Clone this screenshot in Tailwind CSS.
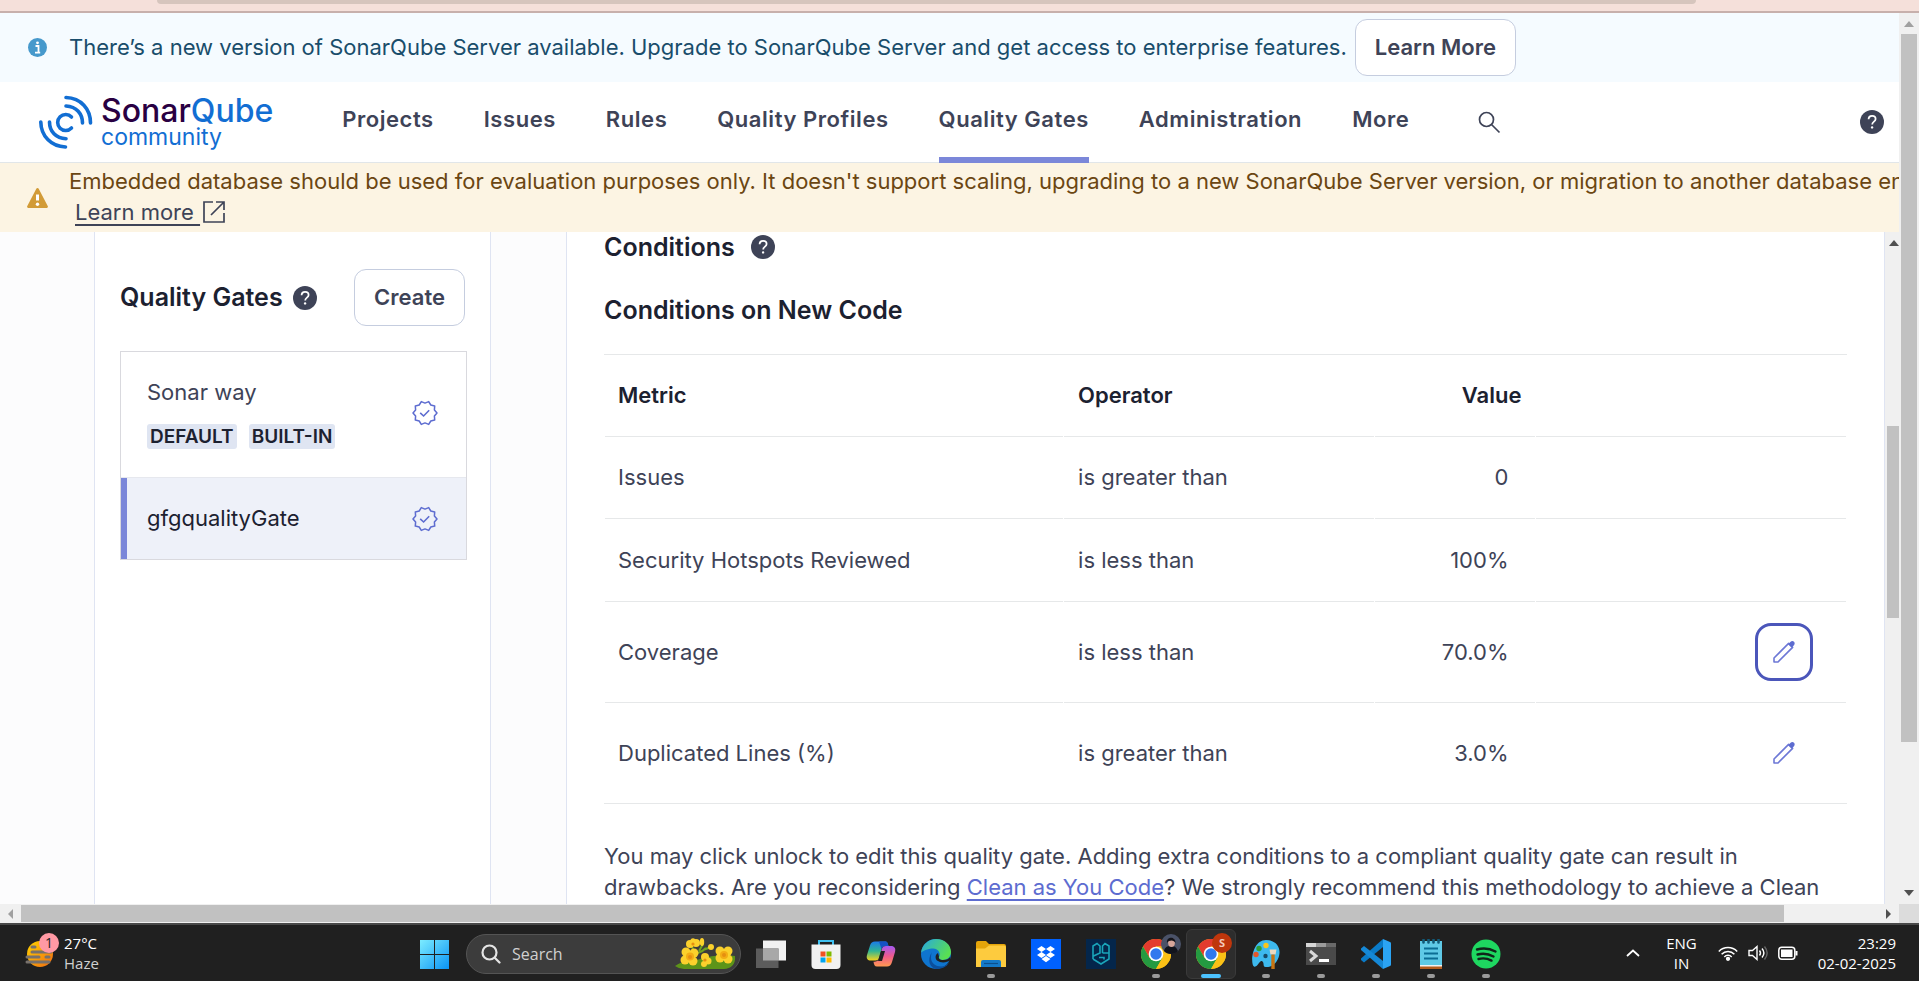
<!DOCTYPE html>
<html lang="en">
<head>
<meta charset="utf-8">
<title>Quality Gates - SonarQube</title>
<script src="https://cdn.jsdelivr.net/npm/@tailwindcss/browser@4"></script>
</head>
<body class="h-screen overflow-hidden flex flex-col bg-white font-['Inter',sans-serif] text-[22px] leading-[31px] text-[#3e4357]">

<!-- shared icon symbols -->
<svg class="hidden">
  <symbol id="help" viewBox="0 0 24 24">
    <circle cx="12" cy="12" r="12" fill="#3e4357"/>
    <path d="M8.6 9.3C8.6 7.2 10 5.8 12.1 5.8s3.5 1.3 3.5 3.2c0 2.6-3.4 2.7-3.4 5.4" fill="none" stroke="#fff" stroke-width="1.8"/>
    <circle cx="12.1" cy="17.4" r="1.2" fill="#fff"/>
  </symbol>
  <symbol id="seal" viewBox="0 0 26 26">
    <path d="M25 13 22.4 16.1 22.7 20.1 18.8 21 16.7 24.4 13 22.9 9.3 24.4 7.200 21 3.300 20.100 3.600 16.100 1 13 3.600 9.900 3.300 5.900 7.200 5 9.300 1.600 13 3.100 16.700 1.600 18.800 5 22.700 5.900 22.400 9.900Z" fill="none" stroke="#5d6cd0" stroke-width="1.5" stroke-linejoin="round"/>
    <path d="m8.2 12.8 3.4 3.2 5.6-5.8" fill="none" stroke="#5d6cd0" stroke-width="1.6"/>
  </symbol>
  <symbol id="pencil" viewBox="0 0 24 24">
    <path d="M2 22v-4L16.600 3.400l4 4L6 22Z" fill="none" stroke="#6d78d6" stroke-width="1.600" stroke-linejoin="round"/>
    <path d="m16.200 4.200 2.400-2.400c1-1 2.600-.8 3.400 0 .9.9.9 2.400 0 3.400l-2.400 2.400Z" fill="#5d6cd0"/>
  </symbol>
  <symbol id="chrome" viewBox="0 0 30 30">
    <circle cx="15" cy="15" r="15" fill="#fbc116"/>
    <path d="M2 7.500A15 15 0 0 1 28 7.500H15L8.500 18.750Z" fill="#e33b2e"/>
    <path d="M2 7.500A15 15 0 0 0 15 30L21.500 18.750 8.500 18.750Z" fill="#249a41"/>
    <path d="M28 7.500H15l6.500 11.250L15 30A15 15 0 0 0 28 7.500Z" fill="#fbc116"/>
    <circle cx="15" cy="15" r="7.300" fill="#fff"/>
    <circle cx="15" cy="15" r="5.700" fill="#3079ee"/>
  </symbol>
</svg>

<!-- browser toolbar edge -->
<div class="h-[13px] shrink-0 bg-[#f5e0da] border-b-2 border-[#c7b0ac] pl-[157px] pr-[223px]">
  <div class="h-1 rounded-b-xl bg-[#d6c5bd]"></div>
</div>

<div class="flex-1 min-h-0 flex">
  <div class="flex-1 min-w-0 flex flex-col">

    <!-- update banner -->
    <div class="h-[69px] shrink-0 flex items-center bg-[#f5fbff] pl-7">
      <svg class="size-[19px] shrink-0" viewBox="0 0 19 19"><circle cx="9.500" cy="9.500" r="9.500" fill="#4699cc"/><circle cx="9.500" cy="4.800" r="1.400" fill="#fff"/><path d="M7.500 8h3v6.500M7 14.600h5.200" fill="none" stroke="#fff" stroke-width="1.800"/></svg>
      <p class="ml-[22px] whitespace-nowrap text-[#194d6b]">There’s a new version of SonarQube Server available. Upgrade to SonarQube Server and get access to enterprise features.</p>
      <button class="ml-2 h-[57px] px-[19px] rounded-xl border border-[#c5cddf] bg-white font-semibold whitespace-nowrap">Learn More</button>
    </div>

    <!-- global navigation -->
    <header class="h-[81px] shrink-0 flex items-center border-b border-[#e1e6e9] bg-white pl-[38px] pr-[15px]">
      <a href="#" class="flex items-center" aria-label="SonarQube community">
        <svg class="size-14" viewBox="0 0 56 56" fill="none" stroke="#126ed3" stroke-width="3.600" stroke-linecap="round"><path d="M28 3.500C43 4 52.500 15 52.500 29M28 12c10.500.5 16.500 8 16.500 17M33.500 23a8 8 0 1 0 0 11M2.800 28C3 42 13 52.500 27.500 53M11.500 28c0 9.500 6.500 16.500 16.500 16.800"/></svg>
        <span class="ml-[7px] flex flex-col">
          <span class="text-[32px] leading-[30px] font-medium text-[#290042]">Sonar<span class="text-[#126ed3]">Qube</span></span>
          <span class="text-[23px] leading-[22px] text-[#126ed3]">community</span>
        </span>
      </a>
      <nav class="ml-[69px] flex self-stretch gap-[50px] font-semibold tracking-wide whitespace-nowrap">
        <a href="#" class="flex items-center pb-1.5">Projects</a>
        <a href="#" class="flex items-center pb-1.5">Issues</a>
        <a href="#" class="flex items-center pb-1.5">Rules</a>
        <a href="#" class="flex items-center pb-1.5">Quality Profiles</a>
        <a href="#" class="-mb-px flex items-center border-b-6 border-[#7b87d9]">Quality Gates</a>
        <a href="#" class="flex items-center pb-1.5">Administration</a>
        <a href="#" class="flex items-center pb-1.5">More</a>
      </nav>
      <button class="ml-[68px]" aria-label="Search"><svg class="size-6" viewBox="0 0 24 24" fill="none" stroke="#3e4357" stroke-width="1.700"><circle cx="9.500" cy="9.500" r="7"/><path d="m14.500 14.500 8 8"/></svg></button>
      <button class="ml-auto" aria-label="Help"><svg class="size-6"><use href="#help"/></svg></button>
    </header>

    <!-- database warning -->
    <div class="h-[69px] shrink-0 flex items-center bg-[#fcf4e3] pl-[27px] overflow-hidden">
      <svg class="w-[21px] h-5 shrink-0" viewBox="0 0 21 20"><path d="M9.300.8a1.400 1.400 0 0 1 2.400 0l9 17.200a1.300 1.300 0 0 1-1.200 2h-18a1.300 1.300 0 0 1-1.200-2Z" fill="#d29b37"/><path d="M10.500 6.500v6" stroke="#fff" stroke-width="3"/><circle cx="10.500" cy="16.300" r="1.700" fill="#fff"/></svg>
      <div class="ml-[21px] pb-0.5 whitespace-nowrap text-[#6b4612]">
        <p>Embedded database should be used for evaluation purposes only. It doesn't support scaling, upgrading to a new SonarQube Server version, or migration to another database engine.</p>
        <a href="#" class="ml-1.5 flex items-center text-[#3e4357]"><span class="whitespace-pre underline underline-offset-4">Learn more </span><svg class="ml-[3px] size-[22px]" viewBox="0 0 22 22" fill="none" stroke="#3e4357" stroke-width="1.700"><path d="M10 1H1v20h20v-9M13 1h8v8M21 1 8 14"/></svg></a>
      </div>
    </div>

    <!-- page body -->
    <div class="flex-1 min-h-0 flex bg-[#fcfcfd] pl-[94px]">
      <aside class="w-[397px] shrink-0 border-x border-[#dfe4f2] bg-white px-[25px] pt-[37px]">
        <div class="flex items-center">
          <h2 class="text-[25px] font-semibold text-[#1c2130] whitespace-nowrap">Quality Gates</h2>
          <svg class="ml-2.5 size-6 shrink-0"><use href="#help"/></svg>
          <button class="ml-auto h-[57px] px-[19px] rounded-xl border border-[#c5cddf] bg-white font-semibold">Create</button>
        </div>
        <ul class="mt-[25px] -mr-0.5 border border-[#d9d9de]">
          <li class="flex items-center justify-between h-[126px] border-b border-[#e6e8ee] pb-1 pl-[26px] pr-7">
            <div>
              <a href="#">Sonar way</a>
              <div class="mt-4 flex gap-3 text-[19px] leading-[25px] font-semibold text-[#1c2130]">
                <span class="rounded-[3px] bg-[#dfe5f2] px-[3px]">DEFAULT</span>
                <span class="rounded-[3px] bg-[#dfe5f2] px-[3px]">BUILT-IN</span>
              </div>
            </div>
            <svg class="size-[26px]"><use href="#seal"/></svg>
          </li>
          <li class="flex items-center justify-between h-[81px] border-l-6 border-[#7b87d9] bg-[#eef1f9] pl-5 pr-7 text-[#1c2130]">
            <a href="#">gfgqualityGate</a>
            <svg class="size-[26px]"><use href="#seal"/></svg>
          </li>
        </ul>
      </aside>

      <main class="ml-[75px] flex-1 min-w-0 border-x border-[#dfe4f2] bg-white px-[37px] overflow-hidden">
        <div class="flex items-center h-[30px]">
          <h3 class="text-[25px] font-semibold text-[#1c2130]">Conditions</h3>
          <svg class="ml-4 size-6"><use href="#help"/></svg>
        </div>
        <h3 class="mt-[33px] text-[25px] leading-[30px] font-semibold text-[#1c2130]">Conditions on New Code</h3>
        <div class="mt-[29px] border-y border-[#e6e8e9]">
          <table class="w-full table-fixed border-separate border-spacing-x-px border-spacing-y-0">
            <colgroup><col class="w-[37%]"><col class="w-[25%]"><col class="w-[13%]"><col></colgroup>
            <thead class="text-[#1c2130]">
              <tr class="h-[82px]">
                <th class="border-b border-[#e6e8e9] px-[13px] text-left font-semibold">Metric</th>
                <th class="border-b border-[#e6e8e9] px-[14px] text-left font-semibold">Operator</th>
                <th class="border-b border-[#e6e8e9] px-[14px] text-right font-semibold">Value</th>
                <th class="border-b border-[#e6e8e9]"></th>
              </tr>
            </thead>
            <tbody>
              <tr class="h-[82px]">
                <td class="border-b border-[#e6e8e9] px-[13px]">Issues</td>
                <td class="border-b border-[#e6e8e9] px-[14px]">is greater than</td>
                <td class="border-b border-[#e6e8e9] pr-[27px] text-right">0</td>
                <td class="border-b border-[#e6e8e9]"></td>
              </tr>
              <tr class="h-[83px]">
                <td class="border-b border-[#e6e8e9] px-[13px]">Security Hotspots Reviewed</td>
                <td class="border-b border-[#e6e8e9] px-[14px]">is less than</td>
                <td class="border-b border-[#e6e8e9] pr-[27px] text-right">100%</td>
                <td class="border-b border-[#e6e8e9]"></td>
              </tr>
              <tr class="h-[101px]">
                <td class="border-b border-[#e6e8e9] px-[13px]">Coverage</td>
                <td class="border-b border-[#e6e8e9] px-[14px]">is less than</td>
                <td class="border-b border-[#e6e8e9] pr-[27px] text-right">70.0%</td>
                <td class="border-b border-[#e6e8e9] pr-[33px]"><button class="ml-auto size-[58px] flex items-center justify-center rounded-2xl border-3 border-[#4b56ba]" aria-label="Edit Coverage"><svg class="size-6"><use href="#pencil"/></svg></button></td>
              </tr>
              <tr class="h-[100px]">
                <td class="px-[13px]">Duplicated Lines (%)</td>
                <td class="px-[14px]">is greater than</td>
                <td class="pr-[27px] text-right">3.0%</td>
                <td class="pr-[33px]"><button class="ml-auto size-[58px] flex items-center justify-center rounded-2xl" aria-label="Edit Duplicated Lines"><svg class="size-6"><use href="#pencil"/></svg></button></td>
              </tr>
            </tbody>
          </table>
        </div>
        <p class="mt-[37px] whitespace-nowrap">You may click unlock to edit this quality gate. Adding extra conditions to a compliant quality gate can result in<br>drawbacks. Are you reconsidering <a href="#" class="text-[#5d6cd0] underline underline-offset-4">Clean as You Code</a>? We strongly recommend this methodology to achieve a Clean</p>
      </main>

      <!-- inner scrollbar -->
      <div class="w-3.5 shrink-0 flex flex-col items-end bg-[#f0f0f0]">
        <svg class="mt-2 w-[10px] h-1.5" viewBox="0 0 10 6"><path d="M5 0l5 6H0Z" fill="#505050"/></svg>
        <div class="mt-[180px] h-48 w-3 bg-[#c1c1c1]"></div>
      </div>
    </div>

    <!-- horizontal scrollbar -->
    <div class="h-[19px] shrink-0 flex items-center bg-[#f0f0f0] pl-2">
      <svg class="w-[5px] h-[10px]" viewBox="0 0 5 10"><path d="M5 0v10L0 5Z" fill="#a0a0a0"/></svg>
      <div class="ml-2 h-[17px] flex-1 bg-[#c1c1c1]"></div>
      <svg class="ml-[102px] mr-2 w-[5px] h-[10px]" viewBox="0 0 5 10"><path d="M0 0v10l5-5Z" fill="#505050"/></svg>
    </div>
  </div>

  <!-- vertical scrollbar -->
  <div class="w-5 shrink-0 flex flex-col items-center bg-[#f0f0f0]">
    <svg class="mt-2 shrink-0 w-[10px] h-1.5" viewBox="0 0 10 6"><path d="M5 0l5 6H0Z" fill="#a0a0a0"/></svg>
    <div class="mt-[7px] h-[708px] w-4 bg-[#c1c1c1]"></div>
    <svg class="mt-auto mb-2 shrink-0 w-[10px] h-1.5" viewBox="0 0 10 6"><path d="M0 0h10L5 6Z" fill="#505050"/></svg>
    <div class="h-[19px] w-full shrink-0 bg-[#dcdcdc]"></div>
  </div>
</div>

<!-- taskbar -->
<footer class="h-[58px] shrink-0 grid grid-cols-[1fr_auto_1fr] items-center border-t-2 border-[#484848] bg-[#202020] text-[15px] leading-5 text-white font-['Open_Sans','Noto_Sans',sans-serif]">
  <button class="flex items-center pl-[25px] text-left">
    <svg class="w-[34px] h-9 mb-1.5" viewBox="0 0 34 36">
      <defs><linearGradient id="sun" x1="0" y1="0" x2="1" y2="1"><stop offset="0" stop-color="#ffd400"/><stop offset="1" stop-color="#f06a12"/></linearGradient></defs>
      <circle cx="15" cy="22" r="13" fill="url(#sun)"/>
      <path d="M7 15h3M7 20h19M2 25h12M21 25h3M2 30h22" stroke="#77716c" stroke-width="3" stroke-linecap="round"/>
      <circle cx="24" cy="11" r="10" fill="#ff99a4"/>
      <text x="24" y="16" text-anchor="middle" font-size="14" fill="#222">1</text>
    </svg>
    <span class="ml-[5px]">27°C<br><span class="text-[#d0d0d0]">Haze</span></span>
  </button>

  <div class="flex items-center h-full pt-0.5 pl-3">
    <button aria-label="Start"><svg class="size-[29px]" viewBox="0 0 29 29"><defs><linearGradient id="win" x1="0" y1="0" x2="1" y2="1" gradientUnits="objectBoundingBox"><stop offset="0" stop-color="#7cecff"/><stop offset="1" stop-color="#0a93f5"/></linearGradient></defs><path d="M0 0h14v14H0ZM15 0h14v14H15ZM0 15h14v14H0ZM15 15h14v14H15Z" fill="url(#win)"/></svg></button>
    <label class="ml-[17px] w-[275px] h-10 flex items-center rounded-full border border-[#545454] bg-[#3c3c3c] pl-[14px] pr-1">
      <svg class="size-5" viewBox="0 0 20 20" fill="none" stroke="#e4e4e4" stroke-width="2.200" stroke-linecap="round"><circle cx="8.500" cy="8.500" r="7"/><path d="m14 14 4.500 4.500"/></svg>
      <input type="text" placeholder="Search" aria-label="Search" class="ml-[11px] w-0 flex-1 bg-transparent text-[16px] placeholder:text-[#d0d0d0] outline-none">
      <svg class="w-[61px] h-[32px]" viewBox="0 0 61 32">
        <path d="M0 28C5 24 10 23 16 24c14-5 28-8 44-6 1 8-4 13-11 13H9Q4 31 0 28Z" fill="#5d9419"/>
        <path d="M12 26C17 12 24 18 31 10M20 15l-4-8M24 13l4-7M28 12l8-3" fill="none" stroke="#6fa321" stroke-width="2"/>
        <g fill="#fbd12c"><circle cx="11" cy="14" r="4.500"/><circle cx="19" cy="15" r="4.500"/><circle cx="10" cy="22" r="4.500"/><circle cx="18" cy="23" r="4.500"/><circle cx="15" cy="6" r="4"/><circle cx="21" cy="5" r="4"/><circle cx="18" cy="2.800" r="2.600"/><circle cx="45" cy="13" r="4.500"/><circle cx="53" cy="13" r="4.500"/><circle cx="45" cy="20" r="4.500"/><circle cx="53" cy="21" r="4.500"/><circle cx="30" cy="19" r="4"/><circle cx="33" cy="23" r="3.500"/><circle cx="29" cy="26" r="3"/><ellipse cx="27" cy="4" rx="2.200" ry="4"/><circle cx="36" cy="9" r="3"/></g>
        <g fill="#f3ac14"><circle cx="15" cy="18.500" r="4"/><circle cx="49" cy="17" r="4"/></g>
        <g fill="#e58f10"><circle cx="15" cy="19" r="2"/><circle cx="49" cy="17" r="2"/><circle cx="30" cy="22" r="1.600"/><circle cx="18" cy="6" r="1.600"/></g>
      </svg>
    </label>

    <div class="ml-[5px] flex h-full items-center gap-[5px]">
      <button class="w-[50px] flex justify-center" aria-label="Task view"><svg class="size-[30px]" viewBox="0 0 30 30"><path d="M7 1.500h23v20H7Z" fill="#f2f2f2"/><path d="M0 9.500h22.500v19.500H0Z" fill="#5c5c5c"/><path d="M7 9.500h15.500v12H7Z" fill="#a8a8a8"/></svg></button>
      <button class="w-[50px] flex justify-center" aria-label="Microsoft Store"><svg class="size-[30px]" viewBox="0 0 30 30"><path d="M8 7V2h14v5" fill="none" stroke="#3fc0f0" stroke-width="2"/><path d="M.5 5.500h29V26a4 4 0 0 1-4 4h-21a4 4 0 0 1-4-4Z" fill="#f1f1f1"/><path d="M9.500 12.500h5v5h-5Z" fill="#f25022"/><path d="M15.500 12.500h5v5h-5Z" fill="#7fba00"/><path d="M9.500 18.500h5v5h-5Z" fill="#00a4ef"/><path d="M15.500 18.500h5v5h-5Z" fill="#ffb900"/></svg></button>
      <button class="w-[50px] flex justify-center" aria-label="Copilot"><svg class="size-[30px]" viewBox="0 0 30 30"><defs><linearGradient id="cpa" x1="0" y1="0" x2="0" y2="1"><stop offset="0" stop-color="#1b7be8"/><stop offset=".5" stop-color="#2fb593"/><stop offset="1" stop-color="#f5d31c"/></linearGradient><linearGradient id="cpb" x1="0" y1="0" x2="0" y2="1"><stop offset="0" stop-color="#a459f2"/><stop offset=".5" stop-color="#ee5a8c"/><stop offset="1" stop-color="#ff9a50"/></linearGradient></defs><path d="M9 2.500h10c2.500 0 2.800 2 3.500 4.500h-4c-1.500 0-2.500 1-3 3l-2 8c-.7 2.500-2 3.500-4 3.500H5c-3.500 0-5-2-4-5.500l3-9.500c.8-2.500 2.500-4 5-4Z" fill="url(#cpa)"/><path d="M13 2.500h6c2.500 0 2.800 2 3.500 4.500h-4c-1.500 0-2.200 1-3 3Z" fill="#1552c4"/><path d="M21 27.500H11c-2.500 0-3-2-3.500-4.800 3 0 5-.7 6-4.200l2.200-8c.6-2.500 2-3.500 4.300-3.500h5c3.500 0 5 2.500 4 6l-3 10c-.8 3-2.500 4.500-5 4.500Z" fill="url(#cpb)"/><path d="m14 15-2 7h4l3-10h-4Z" fill="#202020"/></svg></button>
      <button class="w-[50px] flex justify-center" aria-label="Edge"><svg class="size-[30px]" viewBox="0 0 30 30"><defs><linearGradient id="ea" x1="0" y1="0" x2="1" y2=".5"><stop offset="0" stop-color="#27a7e3"/><stop offset="1" stop-color="#59df52"/></linearGradient></defs><circle cx="15" cy="15" r="15" fill="#0f75cf"/><path d="M0 14C1 5 8 0 15 0c9 0 15 6 15 13 0 5-4 8-8 8-3 0-4.500-1.500-4-3 2-2.500 0-8.500-6-8.500C7 9.500 1 12 0 14Z" fill="url(#ea)"/><path d="M10 19c0 5 5 8.500 10 8.500 3 0 6-1.500 8.500-4.500C25 29 20 30 15 30 9 29 5.500 21 11 13c-1 2-1 4-1 6Z" fill="#0c4f9c"/><path d="M18 17.500c-.8 2 1 3.500 4 3.500 3.500 0 6-1 7.500-3.500l-.5 4c-3 2-9 3-13 0-2-2-2-6 1-7.500Z" fill="#202020"/></svg></button>
      <button class="relative w-[50px] h-full flex items-center justify-center" aria-label="File Explorer"><svg class="size-[30px]" viewBox="0 0 30 30"><path d="M0 4a2 2 0 0 1 2-2h8l3 3h15a2 2 0 0 1 2 2v4H0Z" fill="#e5a50a"/><path d="M0 9.500h9l4-3h15a2 2 0 0 1 2 2V28H0Z" fill="#fdcb3e"/><path d="M5 28v-5a2 2 0 0 1 2-2h16a2 2 0 0 1 2 2v5Z" fill="#1479c8"/><path d="M8 24.500h14" stroke="#0c4f8c" stroke-width="1.200"/></svg><span class="absolute bottom-[3px] h-1 w-2 rounded-full bg-[#9a9a9a]"></span></button>
      <button class="w-[50px] flex justify-center" aria-label="Dropbox"><svg class="size-[30px]" viewBox="0 0 30 30"><path d="M0 0h30v30H0Z" fill="#0061fe"/><path d="m10.500 7 4.500 3-4.500 3L6 10Zm9 0 4.500 3-4.500 3-4.500-3Zm-9 6 4.500 3-4.500 3L6 16Zm9 0 4.500 3-4.500 3-4.500-3Zm-4.500 4 4.500 3-4.500 3.200-4.500-3.200Z" fill="#fff"/></svg></button>
      <button class="w-[50px] flex justify-center" aria-label="PG"><svg class="size-[30px]" viewBox="0 0 30 30"><path d="M0 0h30v30H0Z" fill="#04264b"/><path d="M7 20V7l4-2.500L14 7v7l-6.500 3M16.500 14V7L19 4.500 23 7v13l-8 5-8-5M16.500 14H23M13 18.500h5v2" fill="none" stroke="#1aa5ba" stroke-width="1.600"/></svg></button>
      <button class="relative w-[50px] h-full flex items-center justify-center" aria-label="Chrome"><svg class="size-[30px]"><use href="#chrome"/></svg><svg class="absolute top-[7px] right-0 size-5" viewBox="0 0 20 20"><circle cx="10" cy="10" r="10" fill="#4a5268"/><path d="M3 17c1-4 3-5 7-5s5 1 7 5c-3 4-11 4-14 0Z" fill="#12141c"/><ellipse cx="10.500" cy="8.500" rx="3.400" ry="4.500" fill="#d7a69a"/><path d="M6 9c-1-7 9-7 8.500 0-1.500-3-6-3.500-8.500 0Z" fill="#14141a"/></svg><span class="absolute bottom-[3px] h-1 w-2 rounded-full bg-[#9a9a9a]"></span></button>
      <button class="relative w-[50px] h-[50px] flex items-center justify-center rounded-md border border-[#3a3a3a] bg-[#2d2d2d]" aria-label="Chrome, active"><svg class="size-[30px]"><use href="#chrome"/></svg><span class="absolute top-[3px] right-[3px] size-5 rounded-full bg-[#bf360c] text-center text-[11px] leading-5 font-bold text-[#f3c9bb]">S</span><span class="absolute bottom-0 h-1 w-5 rounded-full bg-[#4cc2ff]"></span></button>
      <button class="relative w-[50px] h-full flex items-center justify-center" aria-label="Paint"><svg class="size-[30px]" viewBox="0 0 30 30"><path d="M15 1C24 1 29 7 28.500 14c-.5 8-7 15-14 14-3-.5-1-4-3-5.500C8.500 20 7 29 3 27.500-1 25 1 1 15 1Z" fill="#3db9ee"/><circle cx="5" cy="15.500" r="2.700" fill="#e3582b"/><circle cx="8" cy="9.500" r="2.700" fill="#2e9e36"/><circle cx="15" cy="6.500" r="2.700" fill="#f9c51c"/><circle cx="14.500" cy="17" r="2.200" fill="#164a68"/><path d="M18.500 10.500h7l-1 5h-5Z" fill="#ead9c1"/><path d="M20.300 15.500h3.400V30h-3.400Z" fill="#c77412"/></svg><span class="absolute bottom-[3px] h-1 w-2 rounded-full bg-[#9a9a9a]"></span></button>
      <button class="relative w-[50px] h-full flex items-center justify-center" aria-label="Terminal"><svg class="size-[30px]" viewBox="0 0 30 30"><path d="M0 4h30v22H0Z" fill="#4a4a4a"/><path d="M0 4h10v4H0Z" fill="#d6d6d6"/><path d="M10 4h10v4H10Z" fill="#9b9b9b"/><path d="M20 4h10v4H20Z" fill="#6a6a6a"/><path d="m4 12 6 5-6 5" fill="none" stroke="#d8d8d8" stroke-width="3"/><path d="M13 21.500h10" stroke="#fff" stroke-width="3"/></svg><span class="absolute bottom-[3px] h-1 w-2 rounded-full bg-[#9a9a9a]"></span></button>
      <button class="relative w-[50px] h-full flex items-center justify-center" aria-label="Visual Studio Code"><svg class="size-[30px]" viewBox="0 0 30 30"><path d="M22 0v8L3 23.500 0 21V19.500Z" fill="#0a7bc8"/><path d="M3 7 22 22v8L0 11V9.500Z" fill="#1588d6"/><path d="m22 0 7 3c.7.300 1 .8 1 1.500v21c0 .7-.3 1.200-1 1.500l-7 3Z" fill="#2ba4f4"/></svg><span class="absolute bottom-[3px] h-1 w-2 rounded-full bg-[#9a9a9a]"></span></button>
      <button class="relative w-[50px] h-full flex items-center justify-center" aria-label="Notepad"><svg class="size-[30px]" viewBox="0 0 30 30"><path d="M4 24h22v6H4Z" fill="#b35c1e"/><path d="M4 24h22v3.500H4Z" fill="#f2f2f2"/><path d="M4 2h22v24H4Z" fill="#5fc9e6"/><path d="M8 9.500h14M8 14.500h14M8 19.500h14" stroke="#0b6d94" stroke-width="1.800"/><path d="M7.500.5v3M12.500.5v3M17.500.5v3M22.500.5v3" stroke="#125a78" stroke-width="2.600" stroke-linecap="round"/></svg><span class="absolute bottom-[3px] h-1 w-2 rounded-full bg-[#9a9a9a]"></span></button>
      <button class="relative w-[50px] h-full flex items-center justify-center" aria-label="Spotify"><svg class="size-[30px]" viewBox="0 0 30 30"><circle cx="15" cy="15" r="14.500" fill="#1ed760"/><path d="M6 10.500c6-1.800 13-1 18.500 2M6.500 15.500c5.500-1.500 11-.8 16 2M7.500 20c4.500-1.200 9-.6 13 1.600" fill="none" stroke="#10251a" stroke-width="2.400" stroke-linecap="round"/></svg><span class="absolute bottom-[3px] h-1 w-2 rounded-full bg-[#9a9a9a]"></span></button>
    </div>
  </div>

  <div class="flex items-center justify-end pr-[23px]">
    <button aria-label="Show hidden icons"><svg class="w-[14px] h-2" viewBox="0 0 14 8" fill="none" stroke="#fff" stroke-width="1.800"><path d="m1 7 6-5.500L13 7"/></svg></button>
    <button class="ml-[26px] text-center">ENG<br>IN</button>
    <button class="ml-[21px] flex items-center gap-[10px]" aria-label="Network, volume, battery">
      <svg class="size-5" viewBox="0 0 20 20" fill="none" stroke="#fff" stroke-width="1.500"><path d="M.8 8.500c5-5.300 13.400-5.300 18.400 0M3.600 11.300c3.500-3.700 9.300-3.700 12.800 0M6.300 14c2-2.200 5.400-2.200 7.400 0"/><circle cx="10" cy="15.800" r="1.400" fill="#fff"/></svg>
      <svg class="size-5" viewBox="0 0 20 20" fill="none" stroke="#fff" stroke-width="1.400"><path d="M1 7.500h3.500L9 3.500v13l-4.500-4H1Z"/><path d="M11.500 7.500c1.200 1.500 1.200 3.500 0 5M14 5.500c2.300 2.700 2.300 6.300 0 9"/><path d="M16.500 3.500c3.300 4 3.300 9 0 13" stroke="#666"/></svg>
      <svg class="size-5" viewBox="0 0 20 20"><rect x=".8" y="4.300" width="16" height="12" rx="3" fill="none" stroke="#fff" stroke-width="1.500"/><path d="M3 6.500h11.500V14H3Z" fill="#fff"/><path d="M18.500 8v4.500" stroke="#fff" stroke-width="2"/></svg>
    </button>
    <button class="ml-5 text-right">23:29<br>02-02-2025</button>
  </div>
</footer>
</body>
</html>
